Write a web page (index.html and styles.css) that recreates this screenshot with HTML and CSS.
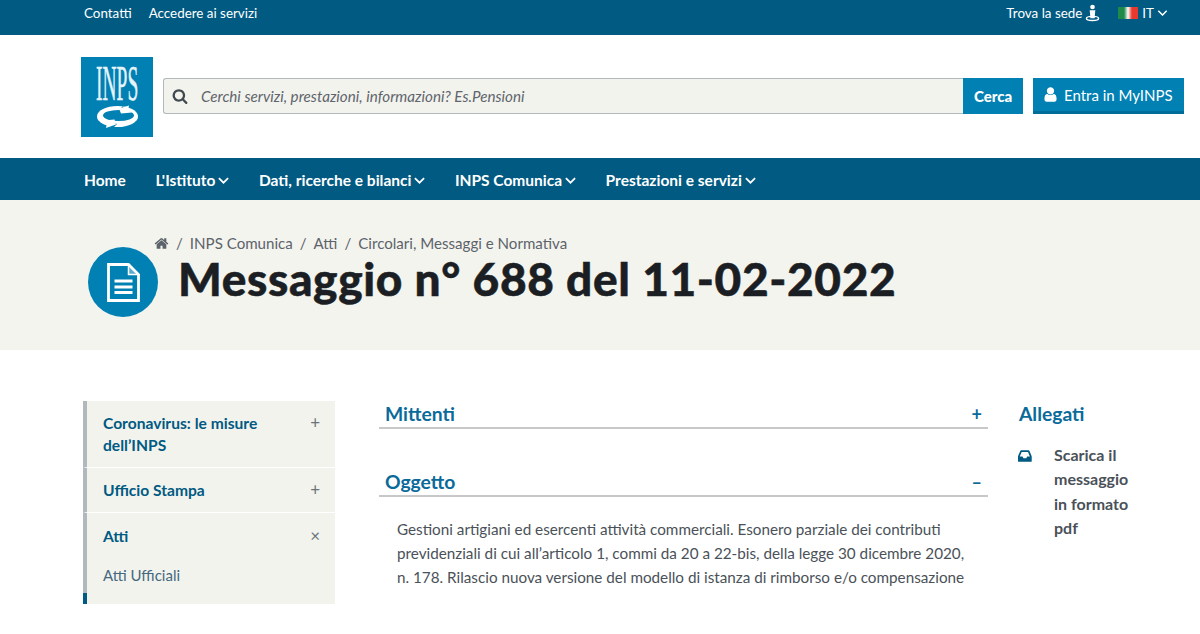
FILE: index.html
```html
<!DOCTYPE html>
<html lang="it">
<head>
<meta charset="utf-8">
<title>Messaggio n° 688 del 11-02-2022</title>
<link rel="stylesheet" href="styles.css">
</head>
<body>
<div class="topbar">
  <div class="top-left"><a>Contatti</a><a>Accedere ai servizi</a></div>
  <div class="top-right">
    <a class="sede">Trova la sede
      <svg class="i-sede" viewBox="0 0 16 18"><circle cx="8" cy="2.600" r="2.500" fill="#fff"/><path d="M5 6h6l-.6 6.500v2H5.600v-2z" fill="#fff"/><ellipse cx="8" cy="14.800" rx="6.500" ry="2.200" fill="none" stroke="#fff" stroke-width="1.500"/></svg>
    </a>
    <span class="flag"></span>
    <a class="lang">IT<svg class="chev" viewBox="0 0 10 6"><path d="M.8.8 5 5 9.200.8" fill="none" stroke="#fff" stroke-width="1.500"/></svg></a>
  </div>
</div>

<header class="header">
  <svg class="logo" viewBox="0 0 72 80">
    <rect width="72" height="80" fill="#0080b3"/>
    <text class="logo-text" transform="translate(15 43) scale(.39 1)">INPS</text>
    <ellipse cx="36.500" cy="59.500" rx="20.500" ry="10.500" fill="#fff"/>
    <ellipse cx="37.500" cy="58.500" rx="15.500" ry="5.500" fill="#0080b3"/>
    <path d="M42 49l2 4-6 3 1-4zM28 70l3-5 5 2-3 3z" fill="#0080b3"/>
    <path d="M38 51.500l10-3-1 4.500 4 2.500-11 1zM35 67.500l-10 3.500 1-5-3.500-2.500 11-1z" fill="#fff"/>
  </svg>
  <form class="search">
    <div class="search-box">
      <svg class="i-search" viewBox="0 0 1792 1792"><path d="M1216 832q0-185-131.500-316.500t-316.500-131.500-316.500 131.500-131.500 316.500 131.500 316.500 316.500 131.500 316.500-131.500 131.500-316.500zm512 832q0 52-38 90t-90 38q-54 0-90-38l-343-342q-179 124-399 124-143 0-273.500-55.500t-225-150-150-225-55.500-273.500 55.500-273.500 150-225 225-150 273.500-55.500 273.500 55.500 225 150 150 225 55.500 273.500q0 220-124 399l343 343q37 37 37 90z"/></svg>
      <span class="placeholder">Cerchi servizi, prestazioni, informazioni? Es.Pensioni</span>
    </div>
    <span class="btn-cerca">Cerca</span>
  </form>
  <a class="btn-entra">
    <svg class="i-user" viewBox="0 0 1792 1792"><path d="M1536 1399q0 109-62.500 187t-150.500 78h-854q-88 0-150.500-78t-62.500-187q0-85 8.500-160.500t31.500-152 58.500-131 94-89 134.500-34.500q131 128 313 128t313-128q76 0 134.500 34.500t94 89 58.500 131 31.500 152 8.500 160.500zm-256-887q0 159-112.500 271.500t-271.500 112.500-271.500-112.500-112.500-271.500 112.500-271.500 271.500-112.500 271.500 112.500 112.500 271.500z"/></svg>
    Entra in MyINPS
  </a>
</header>

<nav class="nav">
  <a>Home</a>
  <a>L'Istituto<svg class="chev" viewBox="0 0 10 6"><path d="M.8.8 5 5 9.200.8" fill="none" stroke="#fff" stroke-width="1.600"/></svg></a>
  <a>Dati, ricerche e bilanci<svg class="chev" viewBox="0 0 10 6"><path d="M.8.8 5 5 9.200.8" fill="none" stroke="#fff" stroke-width="1.600"/></svg></a>
  <a>INPS Comunica<svg class="chev" viewBox="0 0 10 6"><path d="M.8.8 5 5 9.200.8" fill="none" stroke="#fff" stroke-width="1.600"/></svg></a>
  <a>Prestazioni e servizi<svg class="chev" viewBox="0 0 10 6"><path d="M.8.8 5 5 9.200.8" fill="none" stroke="#fff" stroke-width="1.600"/></svg></a>
</nav>

<section class="hero">
  <div class="crumbs">
    <svg class="i-home" viewBox="0 0 1792 1792"><path d="M1472 992v480q0 26-19 45t-45 19h-384v-384h-256v384h-384q-26 0-45-19t-19-45v-480q0-1 .5-3t.5-3l575-474 575 474q1 2 1 6zm223-69l-62 74q-8 9-21 11h-3q-13 0-21-7l-692-577-692 577q-12 8-24 7-13-2-21-11l-62-74q-8-10-7-23.500t11-21.500l719-599q32-26 76-26t76 26l244 204v-195q0-14 9-23t23-9h192q14 0 23 9t9 23v408l219 182q10 8 11 21.500t-7 23.500z"/></svg>
    <span class="sep">/</span><a>INPS Comunica</a><span class="sep">/</span><a>Atti</a><span class="sep">/</span><a>Circolari, Messaggi e Normativa</a>
  </div>
  <div class="hero-title">
    <span class="circle">
      <svg class="i-file" viewBox="0 0 33 39"><path d="M1.500 1.500h20l10 10v26h-30z" fill="none" stroke="#fff" stroke-width="2.800"/><path d="M21.500 1.500v10h10z" fill="#fff" fill-opacity=".35" stroke="#fff" stroke-width="1.500"/><path d="M7.500 18h18M7.500 24h18M7.500 29.500h18" stroke="#fff" stroke-width="3"/></svg>
    </span>
    <h1>Messaggio n° 688 del 11-02-2022</h1>
  </div>
</section>

<main class="content">
  <aside class="side">
    <div class="side-item"><h3>Coronavirus: le misure dell’INPS</h3><span class="sign">+</span></div>
    <div class="side-item"><h3>Ufficio Stampa</h3><span class="sign">+</span></div>
    <div class="side-item open">
      <div class="side-head"><h3>Atti</h3><span class="sign">×</span></div>
      <a class="side-link">Atti Ufficiali</a>
    </div>
  </aside>
  <div class="main-col">
    <div class="acc"><h2>Mittenti</h2><span class="acc-sign">+</span></div>
    <div class="acc second"><h2>Oggetto</h2><span class="acc-sign">–</span></div>
    <p class="body-text">Gestioni artigiani ed esercenti attività commerciali. Esonero parziale dei contributi previdenziali di cui all’articolo 1, commi da 20 a 22-bis, della legge 30 dicembre 2020, n. 178. Rilascio nuova versione del modello di istanza di rimborso e/o compensazione</p>
  </div>
  <aside class="attach">
    <h2>Allegati</h2>
    <div class="attach-row">
      <svg class="i-inbox" viewBox="0 0 1792 1792"><path d="M1023 960h316q-1-3-2.500-8.500t-2.500-7.500l-212-496h-708l-212 496q-1 3-2.500 8.500t-2.500 7.500h316l95 192h320zm513 30v482q0 26-19 45t-45 19h-1408q-26 0-45-19t-19-45v-482q0-62 25-123l238-552q10-25 36.500-42t52.500-17h832q26 0 52.500 17t36.500 42l238 552q25 61 25 123z"/></svg>
      <a>Scarica il messaggio in formato pdf</a>
    </div>
  </aside>
</main>
</body>
</html>
```

FILE: styles.css
```css
* { box-sizing: border-box; }
html, body { height: 634px; overflow: hidden; }
body { margin: 0; background: #fff; font-family: "Lato", "Noto Sans", sans-serif; color: #4a5158; }
a { color: inherit; text-decoration: none; }
h1, h2, h3, p { margin: 0; }

.topbar { height: 35px; background: #005a82; color: #fff; font-size: 13.400px; display: flex; justify-content: space-between; align-items: center; padding: 0 32px 10px 84px; }
.top-left { display: flex; gap: 17px; }
.top-right { display: flex; align-items: center; }
.sede { display: flex; align-items: center; gap: 3px; }
.i-sede { width: 15px; height: 18px; }
.flag { width: 20px; height: 12px; margin-left: 18px; margin-right: 4px; background: linear-gradient(90deg, #1e8a4a 0 30%, #fff 50%, #e8392f 70%); }
.lang { display: flex; align-items: center; gap: 3px; }
.chev { width: 11px; height: 6px; }

.header { height: 123px; display: flex; padding: 22px 16px 0 81px; }
.logo { width: 72px; height: 80px; flex: none; overflow: visible; }
.logo-text { font-family: "Liberation Serif", serif; font-size: 50px; fill: #e6f3f9; stroke: #e6f3f9; stroke-width: .5px; }
.search { display: flex; margin: 21px 0 0 10px; height: 36px; }
.search-box { width: 800px; display: flex; align-items: center; background: #f3f3ee; border: 1px solid #b1b9bd; border-right: 0; border-radius: 3px 0 0 3px; padding-left: 8px; }
.i-search { width: 16px; height: 16px; fill: #40494f; flex: none; }
.placeholder { margin-left: 13px; font-style: italic; font-size: 15.200px; color: #5f656c; }
.btn-cerca { width: 60px; background: #0080b3; color: #fff; font-weight: 900; font-size: 15px; display: flex; align-items: center; justify-content: center; }
.btn-entra { margin: 21px 0 0 10px; width: 151px; height: 36px; background: #0080b3; border-bottom: 3px solid #006c98; color: #fff; font-size: 15px; display: flex; align-items: center; padding-left: 9px; gap: 5px; }
.i-user { width: 17px; height: 17px; fill: #fff; flex: none; }

.nav { height: 42px; background: #005a82; color: #fff; font-weight: 700; font-size: 15.500px; display: flex; align-items: center; gap: 29.500px; padding: 2px 0 0 84px; }
.nav a { display: flex; align-items: center; gap: 3px; }
.nav .chev { width: 11px; height: 7px; }

.hero { height: 150px; background: #f4f4ef; padding: 34px 0 0 88px; }
.crumbs { display: flex; align-items: center; font-size: 15.100px; color: #5c636a; height: 18px; padding-left: 66px; }
.i-home { width: 15px; height: 15px; fill: #5c636a; }
.sep { margin: 0 7px; }
.hero-title { display: flex; align-items: center; gap: 20px; margin-top: -11px; height: 82px; }
.circle { width: 70px; height: 70px; border-radius: 50%; background: #0080b3; display: flex; align-items: center; justify-content: center; flex: none; }
.i-file { width: 33px; height: 39px; }
h1 { font-size: 46px; font-weight: 900; color: #1b1f24; white-space: nowrap; line-height: 1; margin-top: -7px; letter-spacing: .63px; -webkit-text-stroke: .5px #1b1f24; }

.content { display: flex; padding: 51px 0 0 83px; }
.side { width: 252px; flex: none; }
.side-item { background: #f3f3ee; border-left: 4px solid #b1b9bd; border-bottom: 1px solid #fff; padding: 11px 15px 11px 16px; display: flex; justify-content: space-between; align-items: flex-start; }
.side-item h3 { font-size: 15.600px; font-weight: 700; color: #005a82; line-height: 22px; max-width: 170px; }
.sign { font-size: 17px; line-height: 20px; margin-top: 1px; color: #6c7378; }
.open { display: block; height: 91px; padding-top: 12px; border-bottom: 0; position: relative; }
.open::after { content: ""; position: absolute; left: -4px; bottom: 0; width: 4px; height: 11px; background: #005a82; }
.side-head { display: flex; justify-content: space-between; }
.open h3 { color: #005a82; }
.side-link { display: block; margin-top: 17px; font-size: 15px; color: #44687e; line-height: 22px; }

.main-col { width: 609px; margin-left: 44px; flex: none; }
.acc { height: 28px; border-bottom: 2px solid #c8c8c8; display: flex; justify-content: space-between; padding: 0 6px; align-items: center; }
.second { margin-top: 40px; }
.acc h2, .attach h2 { font-size: 19.300px; font-weight: 700; color: #0a6a9a; line-height: 26px; }
.acc-sign { font-size: 18px; font-weight: 700; color: #0a6a9a; }
.body-text { margin: 20px 15px 0 18px; font-size: 15.250px; line-height: 24px; color: #4a5158; }

.attach { width: 130px; margin-left: 31px; flex: none; }
.attach-row { display: flex; margin-top: 16px; }
.i-inbox { width: 16px; height: 16px; fill: #005a82; flex: none; margin-top: 5px; margin-left: -1px; }
.attach-row a { margin-left: 20px; width: 90px; font-size: 16px; font-weight: 700; line-height: 24.300px; color: #4a5158; }
```
